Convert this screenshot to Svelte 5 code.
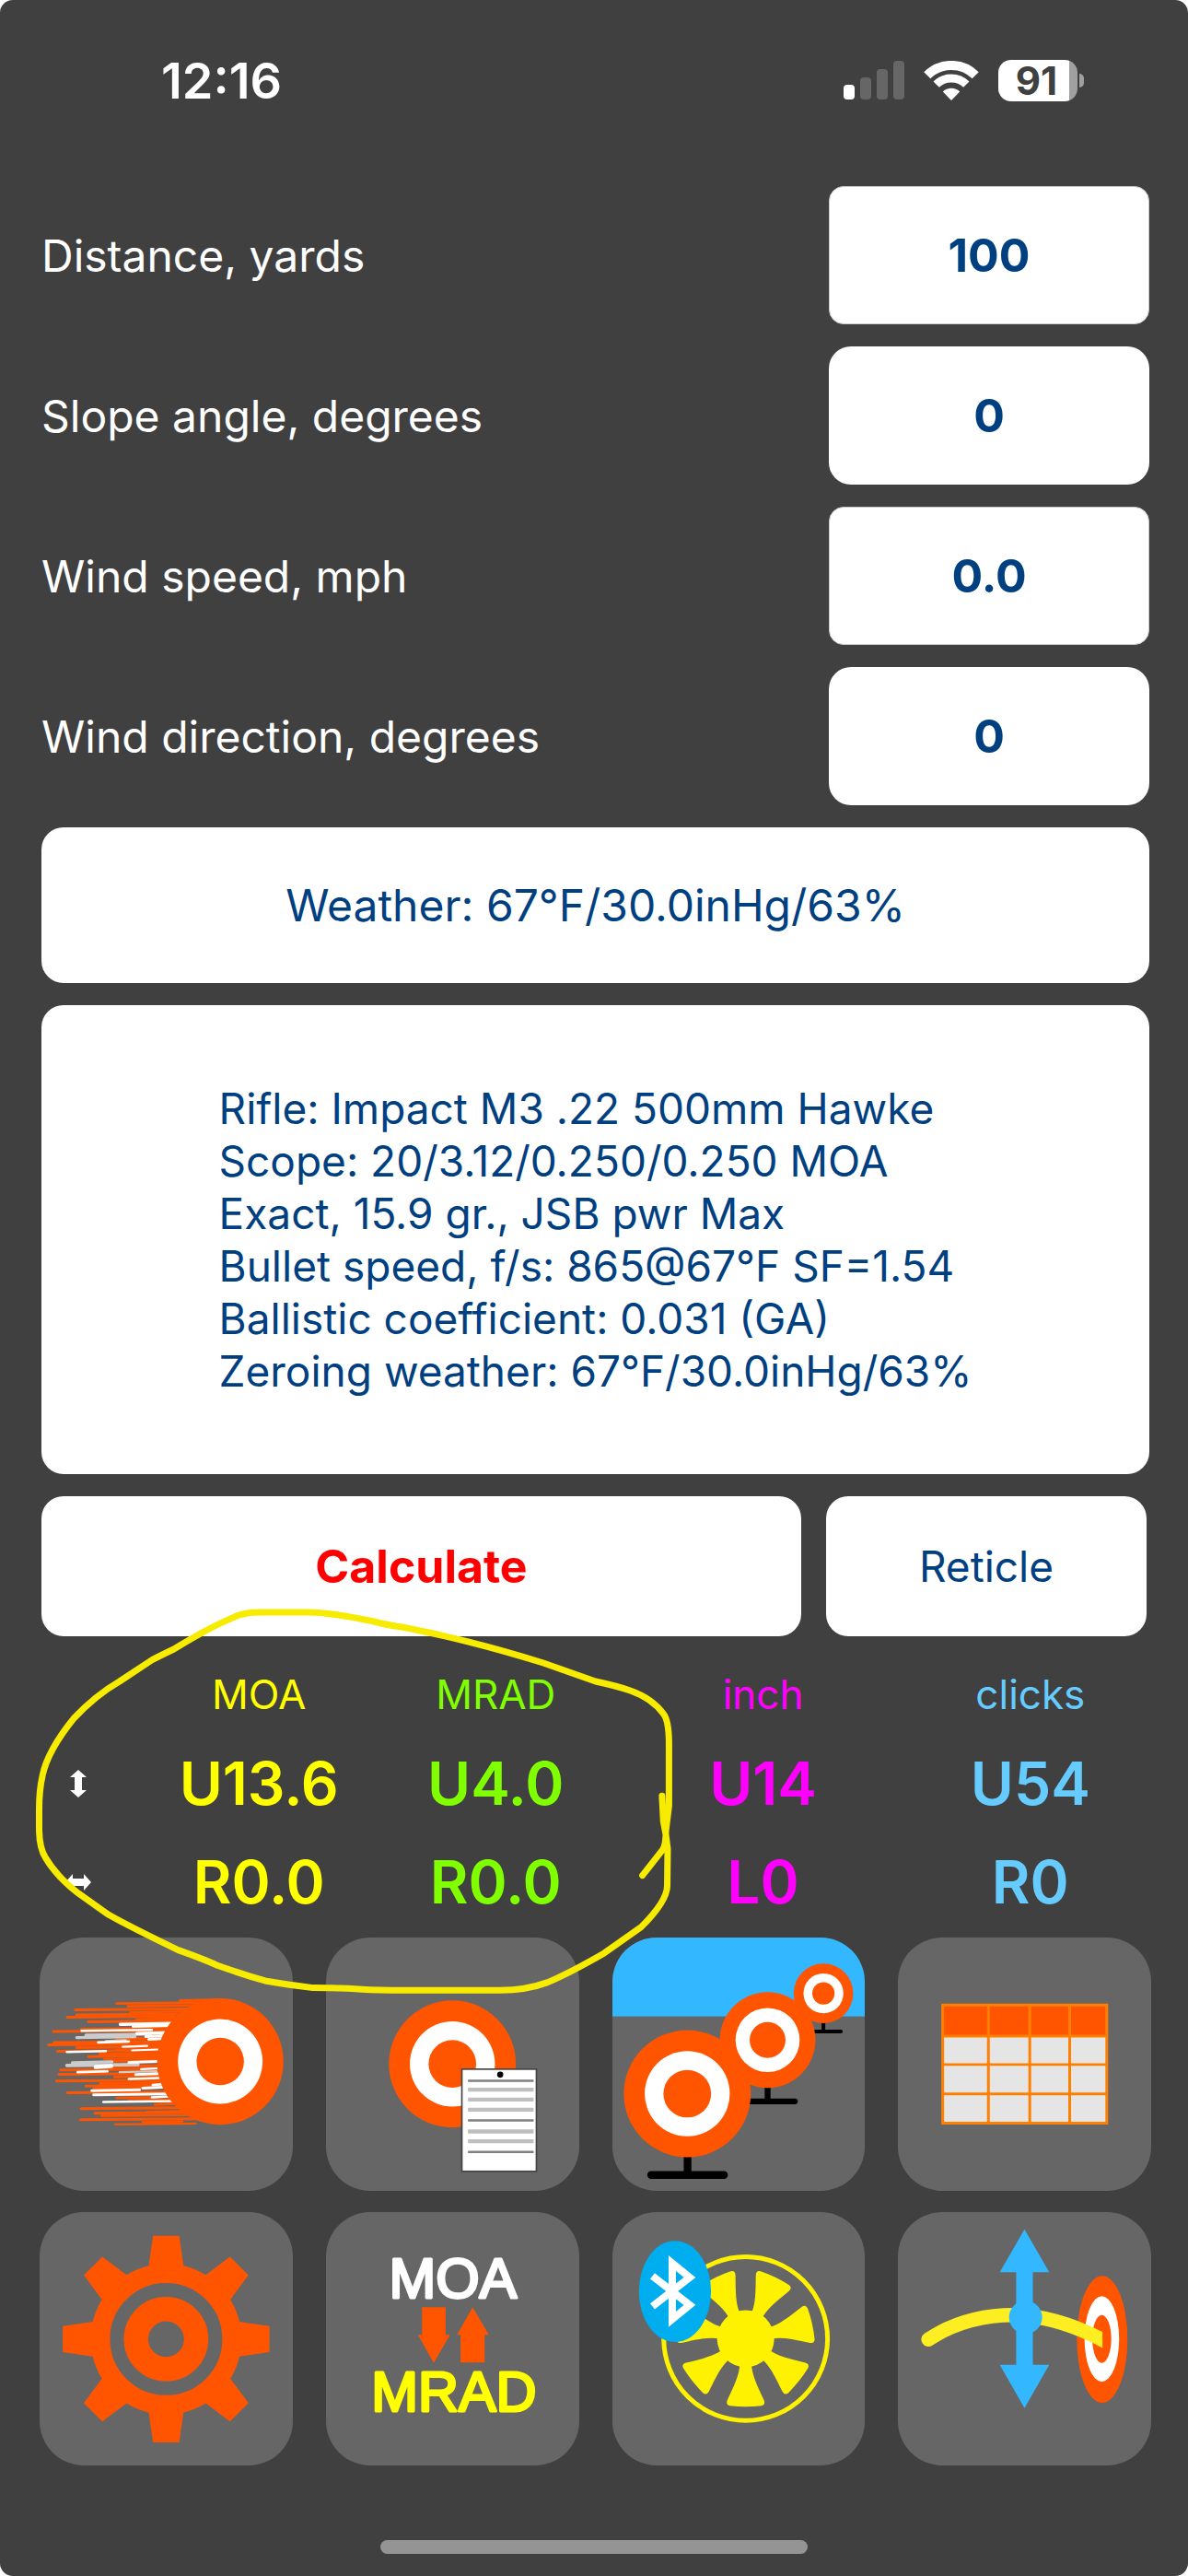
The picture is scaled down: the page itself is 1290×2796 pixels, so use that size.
<script>
  let fields = $state([
    { id: 'distance', label: 'Distance, yards', value: '100', sharp: true },
    { id: 'slope', label: 'Slope angle, degrees', value: '0', sharp: false },
    { id: 'wind-speed', label: 'Wind speed, mph', value: '0.0', sharp: true },
    { id: 'wind-dir', label: 'Wind direction, degrees', value: '0', sharp: false }
  ])

  const weather = '67°F/30.0inHg/63%'

  const profile = [
    'Rifle: Impact M3 .22 500mm Hawke',
    'Scope: 20/3.12/0.250/0.250 MOA',
    'Exact, 15.9 gr., JSB pwr Max',
    'Bullet speed, f/s: 865@67°F SF=1.54',
    'Ballistic coefficient: 0.031 (GA)',
    `Zeroing weather: ${weather}`
  ]

  const results = [
    { unit: 'MOA', cls: 'moa', vertical: 'U13.6', horizontal: 'R0.0' },
    { unit: 'MRAD', cls: 'mrad', vertical: 'U4.0', horizontal: 'R0.0' },
    { unit: 'inch', cls: 'inch', vertical: 'U14', horizontal: 'L0' },
    { unit: 'clicks', cls: 'clicks', vertical: 'U54', horizontal: 'R0' }
  ]

  // speed streaks behind the moving target: x1, x2, y, thickness
  const orangeStreaks = [
    [498, 640, 241, 10], [290, 560, 250, 8], [327, 540, 259, 8], [155, 520, 271, 9],
    [335, 510, 279, 8], [160, 500, 287, 9], [129, 480, 295, 9], [355, 500, 302, 8],
    [198, 480, 310, 9], [175, 460, 333, 8], [84, 460, 341, 9], [240, 450, 351, 8],
    [290, 450, 366, 10], [86, 450, 377, 9], [68, 440, 385, 9], [160, 440, 394, 9],
    [290, 440, 401, 9], [97, 440, 406, 9], [235, 440, 415, 9], [198, 430, 423, 9],
    [250, 430, 431, 7], [280, 430, 438, 9], [270, 430, 456, 10], [108, 430, 467, 9],
    [102, 430, 481, 9], [283, 430, 489, 9], [94, 430, 503, 9], [237, 440, 511, 9],
    [190, 440, 519, 9], [216, 450, 526, 8], [130, 460, 541, 9], [290, 470, 558, 8],
    [330, 480, 566, 7], [415, 480, 579, 9], [175, 510, 593, 9], [219, 540, 608, 9],
    [241, 550, 616, 8], [390, 550, 603, 7], [173, 560, 629, 9], [375, 505, 637, 7],
    [285, 548, 644, 7]
  ]
  const whiteStreaks = [
    [302, 480, 318, 10], [343, 470, 325, 8], [176, 405, 339, 8], [356, 460, 348, 10],
    [385, 450, 358, 9], [395, 450, 367, 9], [230, 330, 377, 8], [310, 390, 391, 7],
    [128, 255, 408, 8], [340, 425, 403, 6], [222, 272, 457, 14], [330, 430, 442, 9],
    [370, 430, 464, 7], [163, 260, 474, 8], [352, 430, 482, 9], [330, 430, 496, 8],
    [408, 440, 516, 8], [375, 440, 526, 9], [209, 365, 534, 9], [215, 450, 548, 9],
    [405, 460, 556, 8], [247, 470, 571, 8]
  ]
  const silverStreaks = [
    [190, 400, 353, 10], [160, 350, 361, 10], [146, 275, 443, 10], [128, 360, 452, 11],
    [255, 320, 372, 6], [300, 420, 474, 7]
  ]

  const teeth = [0, 45, 90, 135, 180, 225, 270, 315]
  const blades = [0, 1, 2, 3, 4, 5, 6].map((i) => (i * 360) / 7)
</script>

{#snippet target(cx, cy, r)}
  <circle {cx} {cy} {r} fill="#ff5500" />
  <circle {cx} {cy} r={r * 0.67} fill="#fff" />
  <circle {cx} {cy} r={r * 0.375} fill="#ff5500" />
{/snippet}

{#snippet streaks(list, color)}
  {#each list as [x1, x2, y, w]}
    <path d="M{x1} {y + 1}L{x2} {y - 2}" stroke={color} stroke-width={w} stroke-linecap="round" />
  {/each}
{/snippet}

<div class="screen">
  <header class="status">
    <span class="time">12:16</span>
    <div class="indicators">
      <svg width="66" height="42" viewBox="0 0 66 42" aria-hidden="true">
        <rect x="0" y="26" width="12" height="16" rx="4" fill="#fff" />
        <rect x="18" y="18" width="12" height="24" rx="4" fill="#666" />
        <rect x="36" y="9" width="12" height="33" rx="4" fill="#666" />
        <rect x="54" y="0" width="12" height="42" rx="4" fill="#666" />
      </svg>
      <svg width="60" height="43" viewBox="0 0 60 43" fill="none" stroke="#fff" stroke-width="10" aria-hidden="true">
        <path d="M3.8 15.8A37 37 0 0 1 56.2 15.8" />
        <path d="M13.7 25.7A23 23 0 0 1 46.3 25.7" stroke-width="9" />
        <path d="M30 43L20.8 33.5A13.2 13.2 0 0 1 39.2 33.5Z" fill="#fff" stroke="none" />
      </svg>
      <div class="battery">
        <span class="level">91</span>
        <span class="nub"></span>
      </div>
    </div>
  </header>

  <main>
    <div class="panel">
      {#each fields as field}
        <div class="field">
          <label for={field.id}>{field.label}</label>
          <input id={field.id} class:sharp={field.sharp} type="text" inputmode="decimal" bind:value={field.value} />
        </div>
      {/each}

      <button class="card weather">Weather: {weather}</button>

      <button class="card profile">
        <span class="lines">
          {#each profile as line}
            <span>{line}</span>
          {/each}
        </span>
      </button>

      <div class="actions">
        <button class="card calculate">Calculate</button>
        <button class="card reticle">Reticle</button>
      </div>
    </div>

    <section class="results">
      <table>
        <thead>
          <tr>
            <td class="axis"></td>
            {#each results as r, i}
              <th scope="col" class={r.cls} class:first={i === 0}>{r.unit}</th>
            {/each}
          </tr>
        </thead>
        <tbody>
          <tr>
            <td class="axis">
              <svg width="18" height="30" viewBox="0 0 18 30" role="img" aria-label="Vertical">
                <path d="M9 0L18 8H13V22H18L9 30L0 22H5V8H0Z" fill="#fff" />
              </svg>
            </td>
            {#each results as r}
              <td class={r.cls}>{r.vertical}</td>
            {/each}
          </tr>
          <tr>
            <td class="axis">
              <svg width="28" height="18" viewBox="0 0 28 18" role="img" aria-label="Horizontal">
                <path d="M0 9L8 0V5H20V0L28 9L20 18V13H8V18Z" fill="#fff" />
              </svg>
            </td>
            {#each results as r}
              <td class={r.cls}>{r.horizontal}</td>
            {/each}
          </tr>
        </tbody>
      </table>

      <!-- hand-drawn marker around MOA and MRAD -->
      <svg class="marker" width="740" height="450" viewBox="0 0 740 450" aria-hidden="true">
        <path
          transform="scale(0.472 0.3333)"
          vector-effect="non-scaling-stroke"
          d="M1478 917L1525 832Q1532 815 1532 770L1539 690V480Q1538 410 1526 390Q1500 340 1450 315Q1420 300 1370 285L1250 225Q1080 150 925 108Q895 103 860 90Q760 60 710 60H600Q560 60 540 75Q480 110 400 180Q370 200 350 215L275 285Q220 330 170 405Q110 510 98 590Q90 640 90 700V770Q91 830 105 860Q130 920 180 975L250 1045Q300 1085 410 1160Q470 1190 500 1210Q560 1240 610 1260Q660 1272 720 1283Q760 1283 800 1285Q850 1291 900 1291H1150Q1210 1291 1260 1265Q1310 1235 1390 1170L1475 1085Q1535 1000 1535 950L1536 830Q1533 785 1526 740L1523 658"
        />
      </svg>
    </section>

    <nav class="tiles">
      <button class="tile" aria-label="Moving target">
        <svg viewBox="39 36 825 825">
          {@render streaks(orangeStreaks, '#ff5500')}
          {@render streaks(silverStreaks, '#ccc')}
          {@render streaks(whiteStreaks, '#fff')}
          {@render target(628, 440, 206)}
        </svg>
      </button>

      <button class="tile" aria-label="Target notes">
        <svg viewBox="39 36 825 825">
          {@render target(451, 448, 207)}
          <rect x="482" y="465" width="243" height="333" fill="#fff" stroke="#444" stroke-width="5" />
          <circle cx="607" cy="483" r="10" />
          <path d="M502 503H716M502 632H716M502 735H716" stroke="#808080" stroke-width="7" />
          <path d="M502 532H716M502 564H716M502 597H716M502 668H716M502 700H716" stroke="#bfbfbf" stroke-width="13" />
        </svg>
      </button>

      <button class="tile" aria-label="Targets">
        <svg viewBox="44 36 825 825">
          <rect x="40" y="30" width="835" height="263" fill="#33b7ff" />
          <path d="M732 300V342M700 342H789" stroke="#000" stroke-width="12" stroke-linecap="round" />
          {@render target(732, 218, 97)}
          <path d="M550 510V570M460 570H639" stroke="#000" stroke-width="19" stroke-linecap="round" />
          {@render target(550, 370, 156)}
          <path d="M289 740V810M170 810H408" stroke="#000" stroke-width="25" stroke-linecap="round" />
          {@render target(288, 545, 207)}
        </svg>
      </button>

      <button class="tile" aria-label="Range table">
        <svg viewBox="47 36 825 825">
          <rect x="193" y="256" width="535" height="385" fill="#e5e5e5" />
          <rect x="193" y="256" width="535" height="101" fill="#ff5500" />
          <path d="M193 256H728V641H193ZM342 256V641M477 256V641M607 256V641M193 357H728M193 450H728M193 546H728" fill="none" stroke="#ff8000" stroke-width="9" />
        </svg>
      </button>

      <button class="tile" aria-label="Settings">
        <svg viewBox="0 0 275 275">
          <g transform="translate(137.5 138)" fill="#ff5500">
            {#each teeth as angle}
              <path d="M-14.2 -112.3H14.2L19.5 -76H-19.5Z" transform="rotate({angle})" />
            {/each}
            <circle r="71.5" fill="none" stroke="#ff5500" stroke-width="21" />
            <circle r="32.7" fill="none" stroke="#ff5500" stroke-width="26.6" />
          </g>
        </svg>
      </button>

      <button class="tile" aria-label="MOA to MRAD converter">
        <svg viewBox="0 0 275 275">
          <text class="unit" x="138" y="93" fill="#fff" stroke="#fff">MOA</text>
          <path d="M104.4 103.3H130V133.3H134.8L117 164L100 133.3H104.4ZM159.4 103.3L177 133.3H172.4V163.4H146.3V133.3H142.3Z" fill="#ff5500" />
          <text class="unit" x="139" y="216" fill="#ff0" stroke="#ff0">MRAD</text>
        </svg>
      </button>

      <button class="tile" aria-label="Bluetooth wind meter">
        <svg viewBox="0 0 275 275">
          <g transform="translate(144.8 137.5)" fill="#fff200">
            <circle r="89" fill="none" stroke="#fff200" stroke-width="5" />
            <circle r="31" />
            {#each blades as angle}
              <path d="M-6.5 27C-6 38 -13 52 -20 67Q-22 72 -17 73Q0 75 17 73Q22 72 20 67C13 52 6 38 6.5 27Z" transform="rotate({angle})" />
            {/each}
          </g>
          <ellipse cx="68" cy="86.2" rx="39.2" ry="55" fill="#00adef" />
          <path d="M43.5 69.5L84 101L65 116.5V55.5L84 71L43.5 102.5" fill="none" stroke="#fff" stroke-width="8" stroke-miterlimit="10" />
        </svg>
      </button>

      <button class="tile" aria-label="Trajectory">
        <svg viewBox="0 0 275 275">
          <ellipse cx="222" cy="138.2" rx="27.5" ry="69" fill="#ff5500" />
          <ellipse cx="221.6" cy="137.8" rx="18.8" ry="46.5" fill="#fff" />
          <ellipse cx="221.6" cy="137.8" rx="10.3" ry="26" fill="#ff5500" />
          <clipPath id="hit"><rect width="222.3" height="275" /></clipPath>
          <path d="M33.2 138.3Q75 111 130 112Q176 113 230 143" fill="none" stroke="#fcee21" stroke-width="15.5" stroke-linecap="round" clip-path="url(#hit)" />
          <path d="M137.6 18.7L164.5 65.3H146.7V166H164.5L137.6 213L110.7 166H128.5V65.3H110.7Z" fill="#33b7ff" />
          <circle cx="138.8" cy="114.3" r="18" fill="#33b7ff" />
        </svg>
      </button>
    </nav>
  </main>

  <div class="home"></div>
</div>

<style>
  :global(body) {
    margin: 0;
    background: #fff;
  }

  .screen {
    min-height: 100vh;
    box-sizing: border-box;
    display: flex;
    flex-direction: column;
    padding-bottom: 24px;
    background: #404040;
    border-radius: 14px;
    color: #fff;
    font-family: Inter, Roboto, sans-serif;
    font-size: 48px;
    overflow: hidden;
  }

  .status {
    display: flex;
    align-items: center;
    justify-content: space-between;
    height: 174px;
    padding: 0 113px 0 175px;
  }
  .time { font-size: 54px; font-weight: 600; }
  .indicators { display: flex; align-items: center; gap: 21px; }

  .battery { display: flex; align-items: center; gap: 2px; }
  .level {
    width: 86px;
    height: 45px;
    box-sizing: border-box;
    padding-right: 3px;
    border-radius: 14px;
    background: linear-gradient(to right, #fff 90%, #a0a0a0 90%);
    color: #404040;
    font-size: 42px;
    font-weight: 700;
    line-height: 45px;
    text-align: center;
  }
  .nub {
    width: 5px;
    height: 15px;
    border-radius: 0 5px 5px 0;
    background: #a0a0a0;
  }

  .panel {
    display: flex;
    flex-direction: column;
    gap: 24px;
    padding: 28px 42px 0 45px;
  }

  .field {
    display: flex;
    align-items: center;
    justify-content: space-between;
  }

  input {
    width: 348px;
    height: 150px;
    box-sizing: border-box;
    padding: 0;
    border: none;
    border-radius: 24px;
    background: #fff;
    color: #004080;
    font: inherit;
    font-size: 50px;
    font-weight: 700;
    text-align: center;
  }
  input.sharp { border: 1px solid #ccc; border-radius: 16px; }

  button {
    padding: 0;
    border: none;
    font: inherit;
    cursor: pointer;
  }

  .card {
    border-radius: 24px;
    background: #fff;
    color: #004080;
  }
  .weather { height: 169px; }
  .profile { padding: 84px 0 83px; font-size: 46px; line-height: 57px; }
  .lines { display: inline-flex; flex-direction: column; text-align: left; }

  .actions {
    display: grid;
    grid-template-columns: 1fr 348px;
    gap: 27px;
    padding-right: 3px;
  }
  .actions .card { height: 152px; }
  .calculate { color: #f00; font-size: 50px; font-weight: 700; }
  .reticle { font-size: 46px; }

  .results {
    position: relative;
    padding: 20px 26px 7px 0;
  }
  table { width: 100%; table-layout: fixed; border-collapse: collapse; }
  th, td { padding: 0; text-align: center; }
  th { height: 86px; font-size: 44px; font-weight: 400; }
  td { font-size: 64px; font-weight: 600; }
  tbody td { height: 107px; line-height: 107px; }
  .axis,
  tbody .axis { width: 13.4%; line-height: 0; }
  .axis svg { display: inline-block; vertical-align: middle; }
  .first { width: 17.7%; }
  .moa { color: #ff0; }
  .mrad { color: #80ff00; }
  .inch { color: #f0f; }
  .clicks { color: #66ccff; }

  .marker {
    position: absolute;
    top: -46px;
    left: 0;
    z-index: 1;
    fill: none;
    stroke: #f7ec00;
    stroke-width: 7px;
    stroke-linecap: round;
    stroke-linejoin: round;
    pointer-events: none;
  }

  .tiles {
    display: grid;
    grid-template-columns: repeat(4, 1fr);
    gap: 23px 36px;
    padding: 0 40px 0 43px;
  }
  .tile {
    aspect-ratio: 1;
    border-radius: 48px;
    background: #666;
    overflow: hidden;
  }
  .tile svg { display: block; width: 100%; height: 100%; }
  .unit {
    font-family: "Liberation Sans", Arial, sans-serif;
    font-size: 61px;
    stroke-width: 3px;
    stroke-linejoin: round;
    text-anchor: middle;
  }

  .home {
    width: 36%;
    height: 15px;
    margin: auto auto 0;
    border-radius: 8px;
    background: #949494;
  }
</style>
